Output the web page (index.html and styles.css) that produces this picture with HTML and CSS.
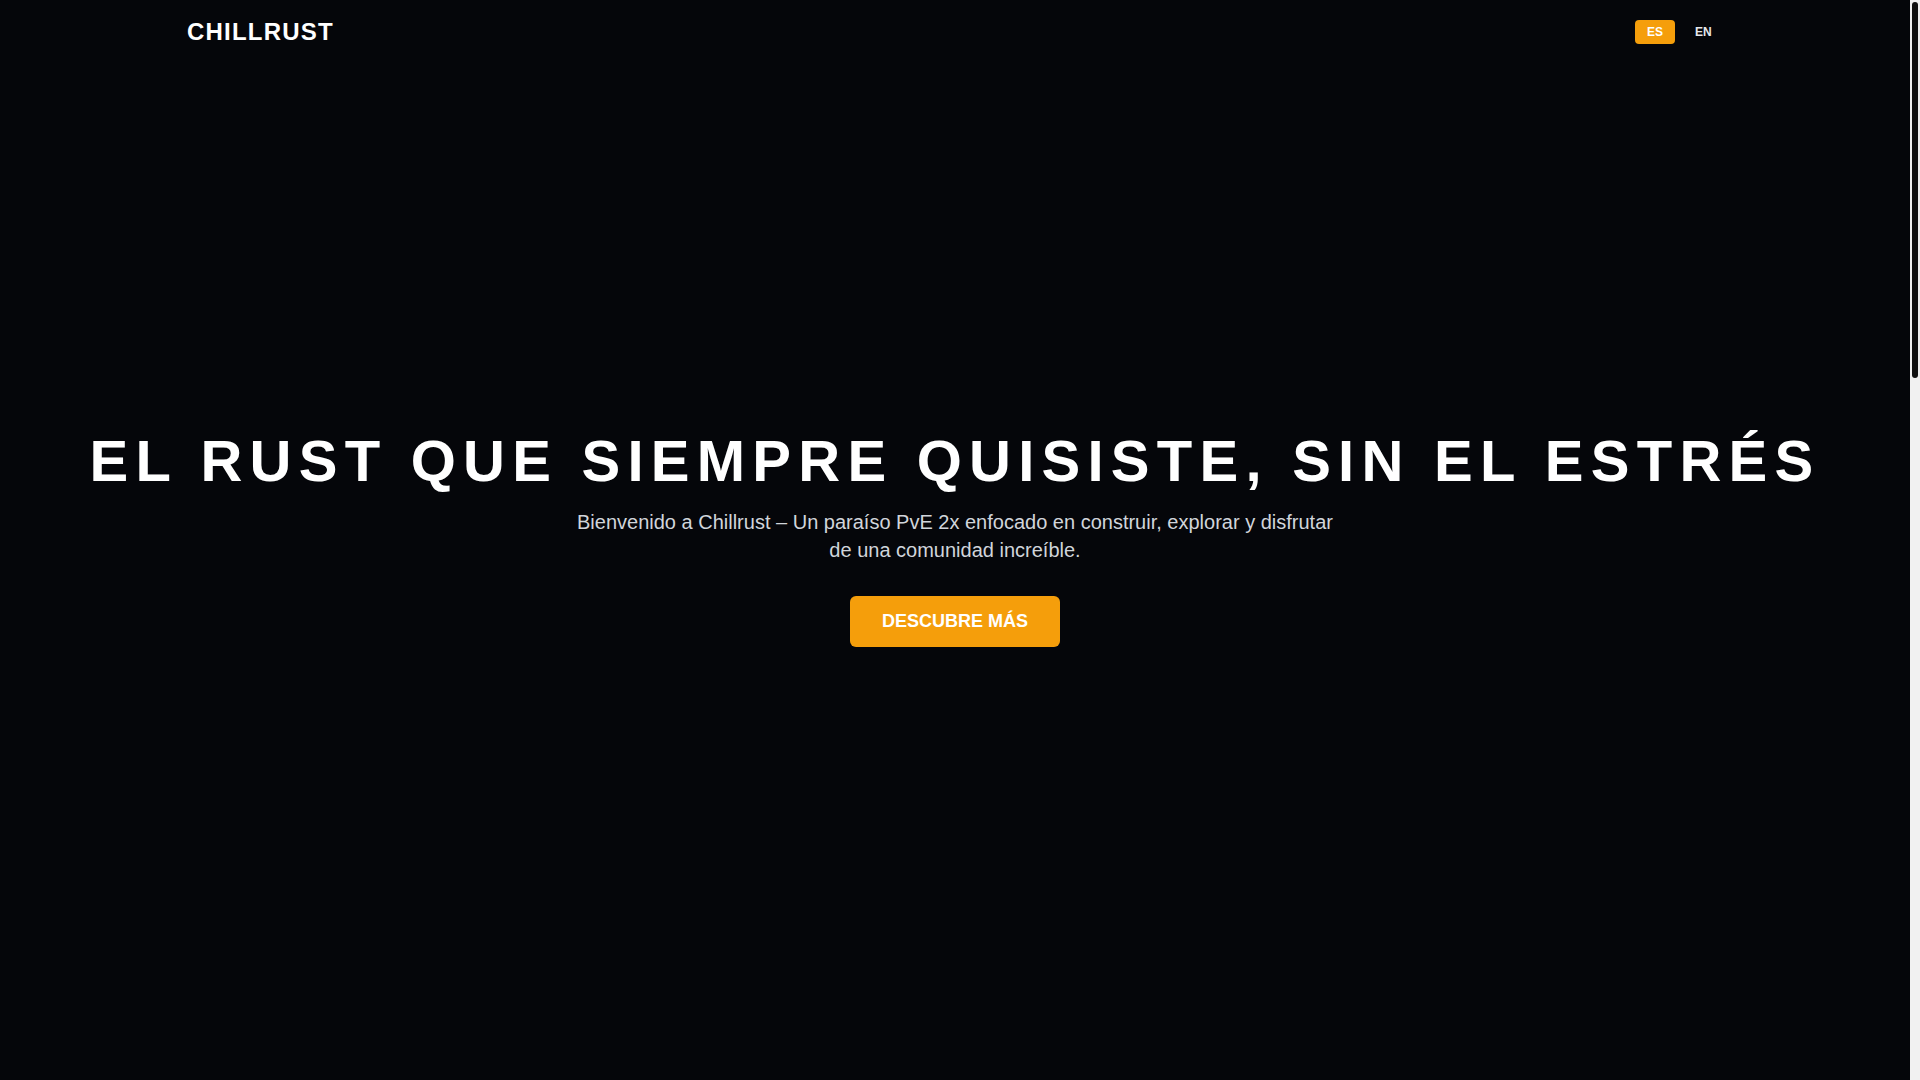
FILE: index.html
```html
<!DOCTYPE html>
<html lang="es">
<head>
<meta charset="utf-8">
<title>Chillrust</title>
<link rel="stylesheet" href="styles.css">
</head>
<body>
<div class="page">
<header class="site-header">
  <div class="container header-inner">
    <a class="logo" href="#">CHILLRUST</a>
    <div class="lang-switch">
      <button class="lang-btn active">ES</button>
      <button class="lang-btn">EN</button>
    </div>
  </div>
</header>
<main>
  <section class="hero">
    <h1 class="hero-title">EL RUST QUE SIEMPRE QUISISTE, SIN EL ESTRÉS</h1>
    <p class="hero-sub">Bienvenido a Chillrust – Un paraíso PvE 2x enfocado en construir, explorar y disfrutar de una comunidad increíble.</p>
    <a class="hero-btn" href="#">DESCUBRE MÁS</a>
  </section>
  <section class="below"></section>
</main>
</div>
<div class="scroll-rail" aria-hidden="true"><div class="scroll-thumb"></div></div>
</body>
</html>
```
FILE: styles.css
```css
html {
  background: #05060a;
}
body {
  margin: 0;
  background: #05060a;
  color: #fff;
  font-family: "Liberation Sans", Arial, sans-serif;
}
.page {
  position: relative;
  margin-right: 10px;
}
.scroll-rail {
  position: fixed;
  top: 0;
  right: 0;
  bottom: 0;
  width: 10px;
  background: #f1f1f1;
  z-index: 100;
}
.scroll-thumb {
  margin: 2px 2px 0;
  height: 376px;
  background: #111;
  border-radius: 3px;
}
.site-header {
  position: absolute;
  top: 0;
  left: 0;
  right: 0;
  z-index: 10;
}
.container {
  max-width: 1536px;
  margin: 0 auto;
}
.header-inner {
  height: 64px;
  display: flex;
  align-items: center;
  justify-content: space-between;
}
.logo {
  color: #fff;
  text-decoration: none;
  font-weight: 700;
  font-size: 24px;
  letter-spacing: 1.2px;
  line-height: 28px;
  margin-top: -1px;
}
.lang-switch {
  display: flex;
  gap: 8px;
}
.lang-btn {
  font-family: "Liberation Sans", Arial, sans-serif;
  font-weight: 700;
  font-size: 12px;
  line-height: 16px;
  padding: 4px 12px;
  border: 0;
  border-radius: 4px;
  background: transparent;
  color: #e5e7eb;
  width: 40px;
  text-align: center;
}
.lang-btn.active {
  background: #f59e0b;
  color: #fff;
}
.hero {
  height: 1072px;
  display: flex;
  flex-direction: column;
  align-items: center;
  justify-content: center;
  text-align: center;
  padding: 0 16px;
}
.hero-title {
  margin: 1px 0 12px;
  font-size: 58px;
  line-height: 70px;
  font-weight: 700;
  letter-spacing: 7.25px;
  white-space: nowrap;
}
.hero-sub {
  margin: 0 0 32px;
  max-width: 768px;
  font-size: 20px;
  line-height: 28px;
  color: #d1d5db;
}
.hero-btn {
  display: inline-block;
  background: #f59e0b;
  color: #fff;
  text-decoration: none;
  font-weight: 700;
  font-size: 18px;
  line-height: 51px;
  padding: 0 32px;
  border-radius: 6px;
}
.below {
  height: 2028px;
}
```
